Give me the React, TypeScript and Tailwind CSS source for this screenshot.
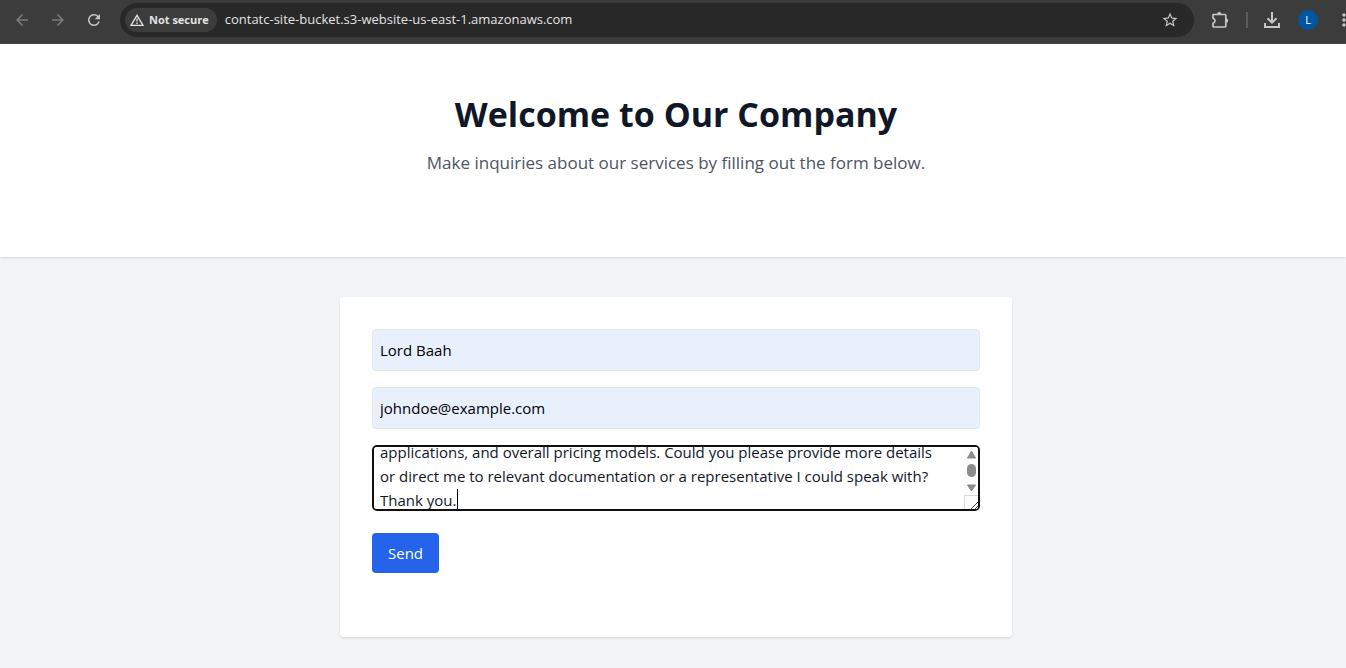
import { useLayoutEffect, useRef } from "react";
import { MdArrowBack, MdArrowForward, MdRefresh, MdStarBorder, MdMoreVert } from "react-icons/md";

const MESSAGE = [
  "applications, and overall pricing models. Could you please provide more details",
  "or direct me to relevant documentation or a representative I could speak with?",
  "Thank you.",
].join("\n");

function WarningIcon() {
  return (
    <svg viewBox="0 0 14 12" className="h-3 w-3.5" fill="none" stroke="#e3e3e3" strokeWidth="1.3" aria-hidden="true">
      <path d="M7 1.300 13 11.300H1Z" />
      <path d="M7 4.500v3M7 8.500v1.400" />
    </svg>
  );
}

function ExtensionIcon() {
  return (
    <svg viewBox="0 0 18 18" className="size-[18px]" aria-hidden="true">
      <path
        d="M2 3.500h12q.8 0 .8.800V15.200q0 .8-.8.800H2.800q-.8 0-.8-.800V12.300q2-.6 2-2.500T2 7.300Z"
        fill="none"
        stroke="#c7c7c7"
        strokeWidth="1.700"
        strokeLinejoin="round"
      />
      <path d="M6 3.300a2.200 2.200 0 0 1 4.400 0ZM15 7.400a2.200 2.200 0 0 1 0 4.400Z" fill="#c7c7c7" />
    </svg>
  );
}

function DownloadIcon() {
  return (
    <svg viewBox="0 0 16 16" className="size-4" fill="none" stroke="#c7c7c7" strokeWidth="2" aria-hidden="true">
      <path d="M8 0v10.500M3.500 6.200 8 10.700l4.500-4.500M1 11v4h14v-4" />
    </svg>
  );
}

function BrowserBar() {
  return (
    <div className="flex h-11 items-start overflow-hidden border-b border-[#4a4a4a] bg-[#3c3c3c] pt-[3px] text-[#c7c7c7]">
      <div className="flex h-[34px] w-[120px] shrink-0 items-center gap-[18px] pl-[13px]">
        <button type="button" aria-label="Back" className="text-[#7c7c7c]">
          <MdArrowBack size={18} />
        </button>
        <button type="button" aria-label="Forward" className="text-[#7c7c7c]">
          <MdArrowForward size={18} />
        </button>
        <button type="button" aria-label="Reload">
          <MdRefresh size={18} />
        </button>
      </div>
      <div className="flex h-[34px] min-w-0 flex-1 items-center rounded-full bg-[#282828] pr-[15px] pl-[5px]">
        <button
          type="button"
          className="flex h-6 shrink-0 items-center gap-[5px] rounded-full bg-[#3c3c3c] pr-2 pl-[5px] text-[11px] font-bold text-[#e3e3e3]"
        >
          <WarningIcon />
          Not secure
        </button>
        <input
          aria-label="Address"
          readOnly
          value="contatc-site-bucket.s3-website-us-east-1.amazonaws.com"
          className="ml-2 min-w-0 flex-1 bg-transparent text-[13px] text-[#e3e3e3] outline-none"
        />
        <button type="button" aria-label="Bookmark">
          <MdStarBorder size={18} />
        </button>
      </div>
      <div className="flex h-[34px] w-[152px] shrink-0 items-center pl-[17px] *:shrink-0">
        <button type="button" aria-label="Extensions">
          <ExtensionIcon />
        </button>
        <span className="ml-[17px] h-4 w-0.5 bg-[#5c5c5c]" />
        <button type="button" aria-label="Downloads" className="ml-4">
          <DownloadIcon />
        </button>
        <button
          type="button"
          aria-label="Profile"
          className="ml-[18px] flex size-5 items-center justify-center rounded-full bg-[#0057a0] text-[11px] text-white"
        >
          L
        </button>
        <button type="button" aria-label="Menu" className="ml-4">
          <MdMoreVert size={20} />
        </button>
      </div>
    </div>
  );
}

function Message() {
  const ref = useRef<HTMLTextAreaElement>(null);
  useLayoutEffect(() => {
    if (ref.current) ref.current.scrollTop = 15;
  }, []);
  return (
    <div className="relative mt-4 h-[66px]">
      <textarea
        ref={ref}
        aria-label="Message"
        defaultValue={MESSAGE}
        className="block h-full w-full resize-none rounded-[5px] border-2 border-[#101010] bg-white py-2 pr-6 pl-1.5 text-[15px] leading-6 whitespace-pre text-gray-900 caret-transparent outline-none [scrollbar-width:none]"
      />
      <span className="absolute top-[44px] left-[85px] h-5 w-px bg-black" />
      <svg viewBox="0 0 14 62" className="absolute top-[2px] right-[2px] h-[62px] w-3.5" aria-hidden="true">
        <path d="M0 0h11q3 0 3 3v56q0 3-3 3H0Z" fill="#fcfcfc" />
        <path d="m7.500 4 4 7h-8ZM7.500 44l4-6h-8Z" fill="#8b8b8b" stroke="#8b8b8b" strokeLinejoin="round" />
        <rect x="3" y="17" width="9" height="13" rx="4.500" fill="#8b8b8b" />
        <path d="M.5 62V48.500H14" fill="none" stroke="#d9d9d9" />
        <path d="m7 62 7-7M11 62l3-3" stroke="#444" fill="none" />
      </svg>
    </div>
  );
}

const fieldClass =
  "block h-[42px] w-full rounded border border-gray-200 bg-[#e8f0fe] px-[7px] text-[15px] text-black outline-none";

export default function App() {
  return (
    <div className="flex min-h-screen flex-col bg-gray-100 font-['Open_Sans','Noto_Sans',sans-serif]">
      <BrowserBar />
      <header className="relative bg-white py-12 pl-[6px] text-center shadow">
        <h1 className="text-[34px] leading-[45px] font-bold text-gray-900">Welcome to Our Company</h1>
        <p className="mt-3 mb-8 text-[17px] leading-7 text-[#4b5563]">
          Make inquiries about our services by filling out the form below.
        </p>
      </header>
      <main className="pt-10 pb-8 pl-[6px]">
        <form
          className="mx-auto max-w-2xl rounded bg-white p-8 pb-16 shadow"
          onSubmit={(event) => event.preventDefault()}
        >
          <input type="text" aria-label="Name" defaultValue="Lord Baah" className={fieldClass} />
          <input
            type="email"
            aria-label="Email"
            defaultValue="johndoe@example.com"
            className={`${fieldClass} mt-4`}
          />
          <Message />
          <button type="submit" className="mt-[22px] block h-10 rounded bg-[#2563eb] px-4 text-[15px] text-white">
            Send
          </button>
        </form>
      </main>
    </div>
  );
}
